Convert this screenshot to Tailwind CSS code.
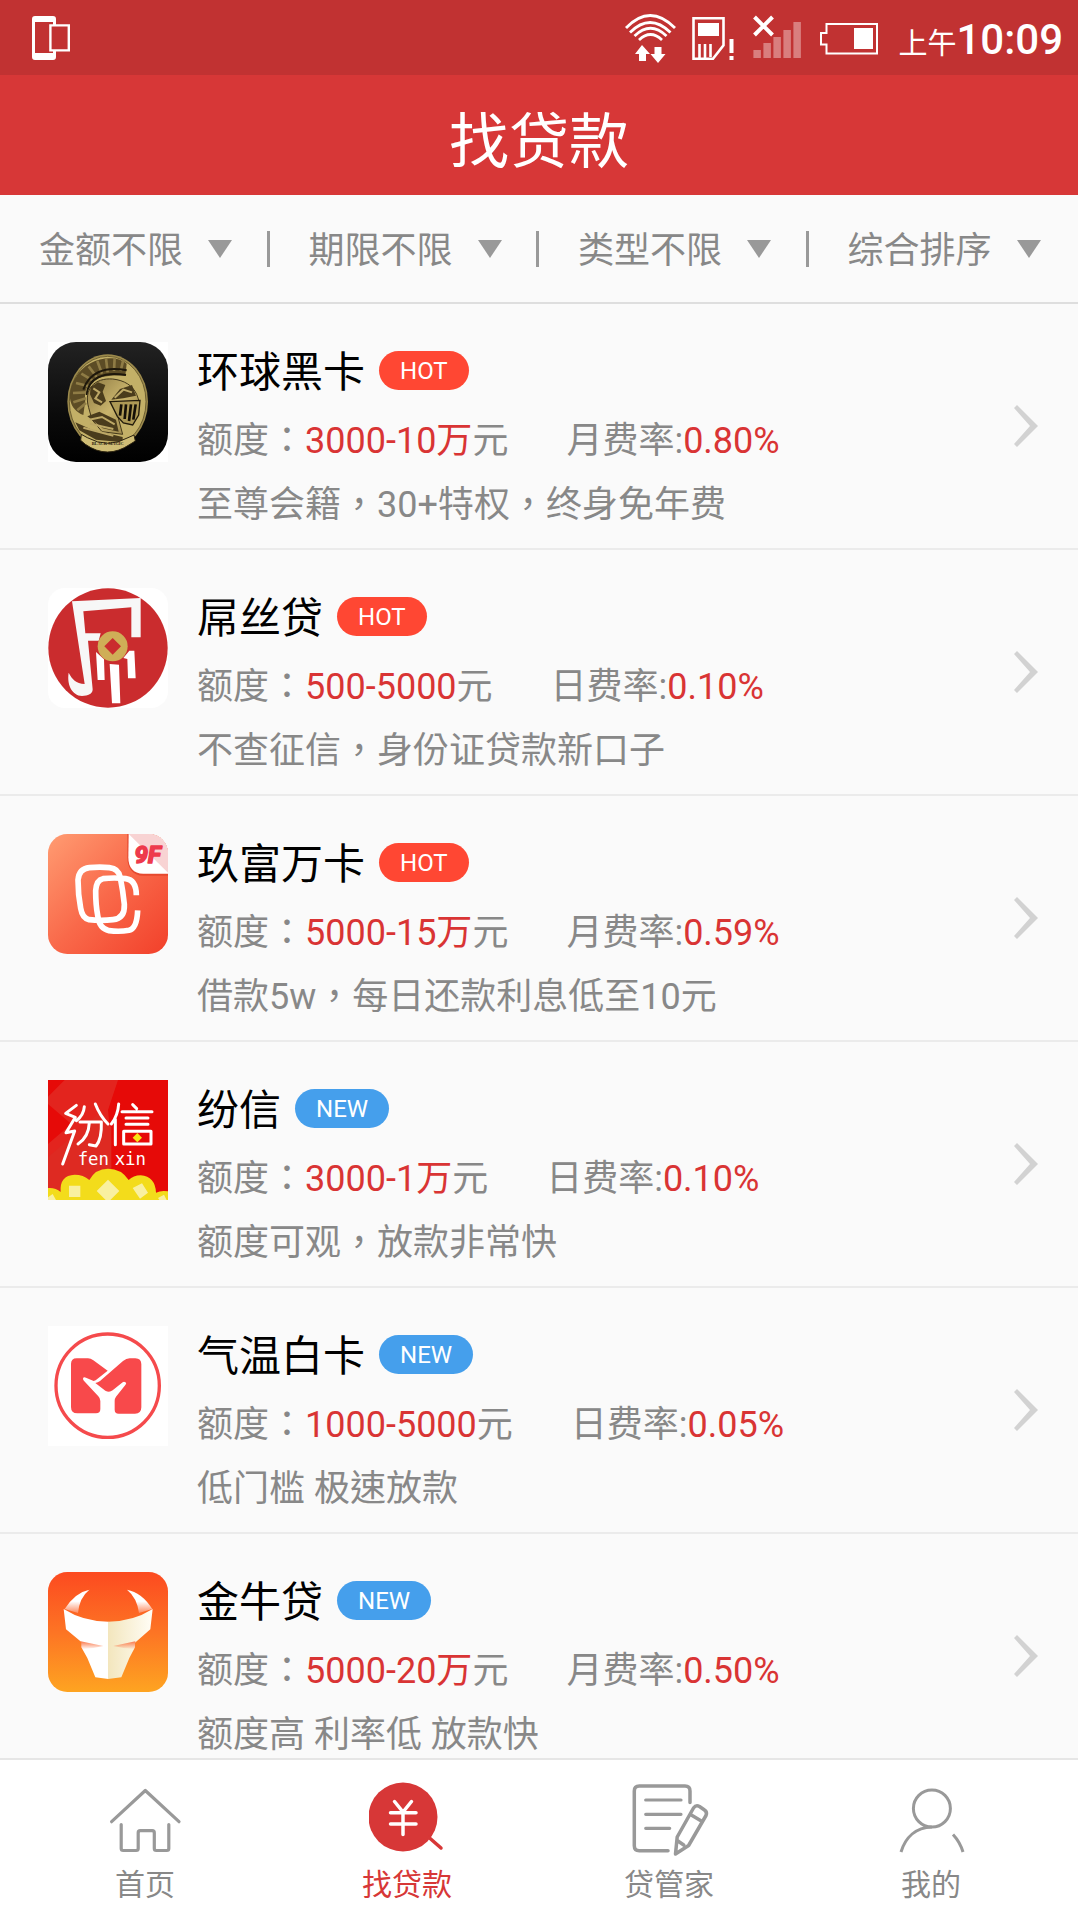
<!DOCTYPE html>
<html lang="zh-Hant">
<head>
<meta charset="utf-8">
<meta name="viewport" content="width=device-width, initial-scale=1">
<title>找贷款</title>
<script src="https://cdn.jsdelivr.net/npm/@tailwindcss/browser@4"></script>
</head>
<body class="flex h-dvh flex-col overflow-hidden bg-[#fafafa] font-[Roboto,'Noto_Sans_CJK_TC',sans-serif] text-[#888]">

<!-- Status bar -->
<div class="flex h-[75px] shrink-0 items-center justify-between bg-[#c13232] pr-[15px] pl-8 text-white">
  <svg class="h-[44px] w-[38px]" viewBox="32 16 38 44" fill="none">
    <path fill="#fff" fill-rule="evenodd" d="M35 16h18q3 0 3 3v6h-3v-3H35v31h18v-3h3v7q0 3-3 3H35q-3 0-3-3V19q0-3 3-3z"/>
    <path stroke="#fff" stroke-width="2.4" d="M50.4 25.4h18.4v25H50.4z"/>
  </svg>
  <div class="flex items-center gap-4">
    <svg class="h-[50px] w-[52px]" viewBox="624 12 52 50" fill="none" stroke="#fff" stroke-width="2.8">
      <path d="M626 27q24-25 49 0M630 31.500q20-20 40.500 0M634.500 35q16-15.500 32 0M639 39q11.500-11 23 0"/>
      <path fill="#fff" stroke="none" d="M642 44l8 9h-4v7h-7v-7h-4zM654.500 46h7v7h4l-7.500 9-7.500-9h4z"/>
    </svg>
    <svg class="h-[50px] w-[44px]" viewBox="691 12 44 50" fill="none" stroke="#fff" stroke-width="2.600">
      <path d="M692.500 17.200h30v27L712 57.800h-19.500z"/>
      <path fill="#fff" stroke="none" d="M697 22h21v13h-21z"/>
      <path d="M698.500 43v14M704 43v14M709.500 43v13"/>
      <path stroke-width="4" d="M730.500 38v14M730.500 55v4"/>
    </svg>
    <svg class="h-[50px] w-[50px]" viewBox="751 12 50 50" fill="none">
      <path fill="#d97e7e" d="M752.400 49h7.500v8h-7.500zM762.400 42h7.500v15h-7.500zM772.400 36h7.500v21h-7.500zM782.400 29h7.500v28h-7.500zM792.400 21h7.500v36h-7.500z"/>
      <path stroke="#fff" stroke-width="4" d="M753.500 16l18 18M771.500 16l-18 18"/>
    </svg>
    <svg class="h-[50px] w-[60px]" viewBox="817 12 60 50" fill="none">
      <path stroke="#fff" stroke-width="2" d="M825.500 23H876v29.500h-50.500V43.500H820v-11.500h5.500z"/>
      <path fill="#fff" d="M853 27h19v21h-19z"/>
    </svg>
    <div class="ml-1 flex items-baseline pt-2 leading-[50px]"><span class="text-[29px]">上午</span><span class="text-[42px] font-medium">10:09</span></div>
  </div>
</div>

<header class="flex h-[120px] shrink-0 items-center justify-center bg-[#d73737] text-white">
  <h1 class="pt-4 text-[60px] leading-[72px] font-normal">找贷款</h1>
</header>

<!-- Filters -->
<form class="grid h-[109px] shrink-0 grid-cols-4 border-b-2 border-[#dedede] text-[36px]">
  <label class="flex items-center pl-[39px]">
    <select aria-label="金额" class="appearance-none bg-transparent pt-1 leading-[54px] outline-none"><option>金额不限</option></select>
    <svg class="mr-auto ml-6 h-[18px] w-6 shrink-0" viewBox="0 0 24 18" fill="#999"><path d="M0 0h24L12 18z"/></svg>
    <span class="h-9 w-[3px] shrink-0 bg-[#999]"></span>
  </label>
  <label class="flex items-center pl-[39px]">
    <select aria-label="期限" class="appearance-none bg-transparent pt-1 leading-[54px] outline-none"><option>期限不限</option></select>
    <svg class="mr-auto ml-6 h-[18px] w-6 shrink-0" viewBox="0 0 24 18" fill="#999"><path d="M0 0h24L12 18z"/></svg>
    <span class="h-9 w-[3px] shrink-0 bg-[#999]"></span>
  </label>
  <label class="flex items-center pl-[39px]">
    <select aria-label="类型" class="appearance-none bg-transparent pt-1 leading-[54px] outline-none"><option>类型不限</option></select>
    <svg class="mr-auto ml-6 h-[18px] w-6 shrink-0" viewBox="0 0 24 18" fill="#999"><path d="M0 0h24L12 18z"/></svg>
    <span class="h-9 w-[3px] shrink-0 bg-[#999]"></span>
  </label>
  <label class="flex items-center pl-[39px]">
    <select aria-label="排序" class="appearance-none bg-transparent pt-1 leading-[54px] outline-none"><option>综合排序</option></select>
    <svg class="mr-auto ml-6 h-[18px] w-6 shrink-0" viewBox="0 0 24 18" fill="#999"><path d="M0 0h24L12 18z"/></svg>
  </label>
</form>

<!-- Loan list -->
<main class="min-h-0 flex-1 overflow-y-auto [scrollbar-width:none]">
<ul class="text-[36px] leading-[64px]">
  <li class="border-b-2 border-[#ebebeb]">
    <a href="#" class="flex h-[244px] items-start pt-[37px] pr-10 pl-12">
      <svg class="mt-px size-[120px] shrink-0" viewBox="54 65 360 360">
        <defs>
          <linearGradient id="blk" x2="0" y2="1"><stop stop-color="#222"/><stop offset=".6" stop-color="#0b0b0b"/><stop offset="1" stop-color="#000"/></linearGradient>
          <linearGradient id="gold" x2="1" y2="1"><stop stop-color="#8e7a43"/><stop offset=".5" stop-color="#c9b46c"/><stop offset="1" stop-color="#8a7640"/></linearGradient>
        </defs>
        <path fill="#fff" d="M54 65h360v360H54z"/>
        <rect x="54" y="65" width="360" height="360" rx="84" fill="url(#blk)"/>
        <ellipse cx="233" cy="244" rx="121" ry="142" fill="#9c8a4c"/>
        <ellipse cx="233" cy="244" rx="115" ry="136" fill="#c3b067" stroke="#4b3f1d" stroke-width="2"/>
        <path fill="#5c4c25" d="M290 130C255 100 170 110 134 176 108 224 118 268 160 284L166 240C160 190 190 160 286 166z"/>
        <path stroke="#8f7c45" stroke-width="8" fill="none" d="M280 118l-8 34M254 112l-2 40M228 114l5 42M202 122l14 38M176 138l24 32M154 160l34 20M138 188l40 10M129 218l42-2M130 246l38-12M142 270l26-22"/>
        <path fill="none" stroke="#1d170b" stroke-width="6" d="M288 164C220 152 174 174 170 224M290 150C220 136 176 160 160 208"/>
        <path fill="url(#gold)" stroke="#44381a" stroke-width="3" d="M176 262C160 206 194 172 248 176c36 4 60 20 72 46l8 22-70 16 6 30 14 52-62-8-30-36z"/>
        <path fill="#4a3c1c" d="M182 200l22-14 22 8-8 20 10 28-16 14-20-8-12-26zM244 238l26-32 36-12 12 32-38 8zM136 306l50 22 92 22v16l-80-8-50-28zM172 288l36-14 50 24 8 36-48-10z"/>
        <path fill="none" stroke="#bda866" stroke-width="6" d="M190 204l18 12-12 18 20 12M254 232l26-24 26 8M178 298l38-8 38 22M180 310l70 16M160 322l90 24"/>
        <path fill="#ad9955" stroke="#211a0b" stroke-width="4" d="M240 244l90-4-4 44-18 30-28-6-18-20z"/>
        <path stroke="#130f07" stroke-width="8" d="M274 252l-4 34M288 252l-4 44M303 252l-6 50M317 252l-7 46"/>
        <path fill="#cfbd76" stroke="#2d2410" stroke-width="3" d="M154 342l18 10q62 34 122 0l18-8 4 18-16 10q-68 46-134 0l-14-12z"/>
        <text x="233" y="375" text-anchor="middle" font-family="Liberation Serif, serif" font-weight="700" font-size="13" fill="#2a210e">BLACK MAGIC</text>
      </svg>
      <div class="ml-[29px] flex-1">
        <div class="mb-1 flex h-16 items-center gap-3.5">
          <h2 class="text-[42px] font-normal text-black">环球黑卡</h2>
          <span class="mb-1.5 h-[39px] rounded-full bg-[#ff4733] px-[21px] text-2xl leading-[40px] text-white">HOT</span>
        </div>
        <p class="flex gap-[58px]"><span>额度：<span class="text-[#d93434]">3000-10万</span>元</span><span>月费率:<span class="text-[#d93434]">0.80%</span></span></p>
        <p>至尊会籍，30+特权，终身免年费</p>
      </div>
      <svg class="mt-16 h-[42px] w-6 shrink-0" viewBox="0 0 24 42" fill="#d2d2d2"><path d="M3 0l21 21L3 42 0 39l16-18L0 3z"/></svg>
    </a>
  </li>
  <li class="border-b-2 border-[#ebebeb]">
    <a href="#" class="flex h-[244px] items-start pt-[37px] pr-10 pl-12">
      <svg class="mt-px size-[120px] shrink-0" viewBox="54 52 360 360">
        <rect x="54" y="52" width="360" height="360" rx="50" fill="#fff"/>
        <circle cx="234" cy="232" r="179" fill="#ca2c2e"/>
        <path fill="#f7f7f7" d="M126 92l206-10v118h-28v-90l-144 12 6 66h46l-6 22h-32l14 146c0 14-14 20-32 20-30-2-46-34-40-70 10 20 22 32 48 34z"/>
        <path fill="#fff" d="M198 244l24 22 2 62h-21zM239 280l28 2 4 116h-25zM280 262l18-22h15l4 83h-23l-2-58z"/>
        <circle cx="248" cy="227" r="45" fill="#cfae57"/>
        <path fill="#ca2c2e" d="M248 202l25 25-25 25-25-25z"/>
      </svg>
      <div class="ml-[29px] flex-1">
        <div class="mb-1 flex h-16 items-center gap-3.5">
          <h2 class="text-[42px] font-normal text-black">屌丝贷</h2>
          <span class="mb-1.5 h-[39px] rounded-full bg-[#ff4733] px-[21px] text-2xl leading-[40px] text-white">HOT</span>
        </div>
        <p class="flex gap-[58px]"><span>额度：<span class="text-[#d93434]">500-5000</span>元</span><span>日费率:<span class="text-[#d93434]">0.10%</span></span></p>
        <p>不查征信，身份证贷款新口子</p>
      </div>
      <svg class="mt-16 h-[42px] w-6 shrink-0" viewBox="0 0 24 42" fill="#d2d2d2"><path d="M3 0l21 21L3 42 0 39l16-18L0 3z"/></svg>
    </a>
  </li>
  <li class="border-b-2 border-[#ebebeb]">
    <a href="#" class="flex h-[244px] items-start pt-[37px] pr-10 pl-12">
      <svg class="mt-px size-[120px] shrink-0" viewBox="54 56 360 360">
        <defs>
          <linearGradient id="org" x2="1" y2="1"><stop stop-color="#ff9c72"/><stop offset=".5" stop-color="#f9694a"/><stop offset="1" stop-color="#f2402a"/></linearGradient>
          <clipPath id="rc"><rect x="54" y="56" width="360" height="360" rx="58"/></clipPath>
        </defs>
        <g clip-path="url(#rc)">
          <path fill="url(#org)" d="M54 56h360v360H54z"/>
          <path fill="#e6492f" d="M292 56h122v125h-74c-32 0-48-24-48-54z"/>
          <path fill="#fff" d="M296 56h118v119h-74c-30 0-45-20-45-48z"/>
          <path fill="#f8d3d3" d="M296 56h118v116z"/>
        </g>
        <text x="353" y="144" text-anchor="middle" font-family="Roboto, sans-serif" font-weight="700" font-style="italic" font-size="72" fill="#ee3a4c" stroke="#ee3a4c" stroke-width="5" stroke-linejoin="round">9F</text>
        <g fill="none" stroke="#fff" stroke-width="17">
          <path d="M144 194q3-34 34-37 32-3 60 0 28 3 33 30 8 40 12 80 2 42-34 46-36 4-72 0-20-4-25-34-8-42-8-85z"/>
          <path d="M319 240q0-46-32-50-34-4-68 0-20 4-22 36 0 42 6 74 4 40 34 46 32 4 60-1 24-6 26-60"/>
        </g>
      </svg>
      <div class="ml-[29px] flex-1">
        <div class="mb-1 flex h-16 items-center gap-3.5">
          <h2 class="text-[42px] font-normal text-black">玖富万卡</h2>
          <span class="mb-1.5 h-[39px] rounded-full bg-[#ff4733] px-[21px] text-2xl leading-[40px] text-white">HOT</span>
        </div>
        <p class="flex gap-[58px]"><span>额度：<span class="text-[#d93434]">5000-15万</span>元</span><span>月费率:<span class="text-[#d93434]">0.59%</span></span></p>
        <p>借款5w，每日还款利息低至10元</p>
      </div>
      <svg class="mt-16 h-[42px] w-6 shrink-0" viewBox="0 0 24 42" fill="#d2d2d2"><path d="M3 0l21 21L3 42 0 39l16-18L0 3z"/></svg>
    </a>
  </li>
  <li class="border-b-2 border-[#ebebeb]">
    <a href="#" class="flex h-[244px] items-start pt-[37px] pr-10 pl-12">
      <svg class="mt-px size-[120px] shrink-0" viewBox="54 58 360 360">
        <path fill="#e60a08" d="M54 58h360v360H54z"/>
        <path fill="#e22b24" d="M54 108l50-50h160l-30 90 10 100-60 80H54V250l70-60-70-60z" opacity=".8"/>
        <path fill="#de2a22" d="M54 290l150-130 40 40v218H54z"/>
        <g fill="none" stroke="#fff" stroke-width="9" stroke-linecap="round" stroke-linejoin="round">
          <path d="M139 134l-32 24 29 12-28 46 26-5-36 99M163 138q-2 26-24 42M196 130q14 36 38 60M150 184h64q2 50-16 72l-20-4M178 186q-2 44-34 64M266 130q-2 34-22 60M256 176v76M308 132l12 12M276 153h90M288 172h66M288 191h66M281 212h82v38h-82z"/>
        </g>
        <text y="312" font-family="DejaVu Sans Mono, monospace" font-size="52" fill="#fff"><tspan x="143">fen</tspan><tspan x="254">xin</tspan></text>
        <path fill="#f8e414" d="M322 217l14 14-14 14-14-14z"/>
        <path fill="#f3dc1b" d="M54 418v-36q22-2 38 12-4-50 42-52 26 0 44 16 18-34 56-34 40 0 62 34 14-14 36-14 44 4 46 52 16-8 36-4v26z"/>
        <path fill="#f9f0a0" d="M117 375h34v34h-34zM234 357l34 34-27 27h-14l-27-27zM308 382l28-14 18 28-24 18zM54 410l14-10 10 18H54zM384 412l18-10 8 16h-22z"/>
      </svg>
      <div class="ml-[29px] flex-1">
        <div class="mb-1 flex h-16 items-center gap-3.5">
          <h2 class="text-[42px] font-normal text-black">纷信</h2>
          <span class="mb-1.5 h-[39px] rounded-full bg-[#459fec] px-[21px] text-2xl leading-[40px] text-white">NEW</span>
        </div>
        <p class="flex gap-[58px]"><span>额度：<span class="text-[#d93434]">3000-1万</span>元</span><span>日费率:<span class="text-[#d93434]">0.10%</span></span></p>
        <p>额度可观，放款非常快</p>
      </div>
      <svg class="mt-16 h-[42px] w-6 shrink-0" viewBox="0 0 24 42" fill="#d2d2d2"><path d="M3 0l21 21L3 42 0 39l16-18L0 3z"/></svg>
    </a>
  </li>
  <li class="border-b-2 border-[#ebebeb]">
    <a href="#" class="flex h-[244px] items-start pt-[37px] pr-10 pl-12">
      <svg class="mt-px size-[120px] shrink-0" viewBox="54 52 360 360">
        <path fill="#fff" d="M54 52h360v360H54z"/>
        <circle cx="233" cy="231" r="155" fill="none" stroke="#f54a4c" stroke-width="10"/>
        <path fill="#f8494b" d="M123 166q0-17 17-17h34q8 0 16 6l43 31-36 29-6 2-23-10q-8-3-9 3 0 4 4 8l42 45q6 6 6 14v24q0 13-13 13h-56q-19 0-19-19z"/>
        <path fill="#f8494b" d="M196 223q8-1 14-6l69-60q10-8 20-8h17q18 0 18 18v129q0 19-19 19h-49q-12 0-12-12v-27q0-6 4-12l28-35q5-6 0-8-4-3-8 0l-30 24q-10 8-22 1z"/>
      </svg>
      <div class="ml-[29px] flex-1">
        <div class="mb-1 flex h-16 items-center gap-3.5">
          <h2 class="text-[42px] font-normal text-black">气温白卡</h2>
          <span class="mb-1.5 h-[39px] rounded-full bg-[#459fec] px-[21px] text-2xl leading-[40px] text-white">NEW</span>
        </div>
        <p class="flex gap-[58px]"><span>额度：<span class="text-[#d93434]">1000-5000</span>元</span><span>日费率:<span class="text-[#d93434]">0.05%</span></span></p>
        <p>低门槛 极速放款</p>
      </div>
      <svg class="mt-16 h-[42px] w-6 shrink-0" viewBox="0 0 24 42" fill="#d2d2d2"><path d="M3 0l21 21L3 42 0 39l16-18L0 3z"/></svg>
    </a>
  </li>
  <li class="border-b-2 border-[#ebebeb]">
    <a href="#" class="flex h-[244px] items-start pt-[37px] pr-10 pl-12">
      <svg class="mt-px size-[120px] shrink-0" viewBox="54 52 360 360">
        <defs>
          <linearGradient id="sun" x2="0" y2="1"><stop stop-color="#fc4a20"/><stop offset=".5" stop-color="#fd7424"/><stop offset="1" stop-color="#fea421"/></linearGradient>
          <linearGradient id="horn" x2="0" y2="1"><stop stop-color="#fff"/><stop offset=".5" stop-color="#fff"/><stop offset="1" stop-color="#fd8a60"/></linearGradient>
          <linearGradient id="face"><stop stop-color="#f3e6bd"/><stop offset="1" stop-color="#fffdf6"/></linearGradient>
          <linearGradient id="shade" x2="0" y2="1"><stop stop-color="#fb7a4c"/><stop offset="1" stop-color="#fb7a4c" stop-opacity="0"/></linearGradient>
        </defs>
        <rect x="54" y="52" width="360" height="360" rx="58" fill="url(#sun)"/>
        <path fill="url(#horn)" d="M104 163q32-50 74-58-30 24-34 70zM367 163q-32-50-76-58 30 24 36 70z"/>
        <path fill="#fff" d="M101 163q60 38 134 38v172l-39-5-24-58-18-32v-16l-46-38z"/>
        <path fill="url(#face)" d="M368 163q-60 38-134 38v172l40-5 24-58 17-32v-14l46-40z"/>
        <path fill="url(#shade)" d="M152 260l68 14-30 6-36 4zM316 260l-66 14 30 6 35 4z"/>
      </svg>
      <div class="ml-[29px] flex-1">
        <div class="mb-1 flex h-16 items-center gap-3.5">
          <h2 class="text-[42px] font-normal text-black">金牛贷</h2>
          <span class="mb-1.5 h-[39px] rounded-full bg-[#459fec] px-[21px] text-2xl leading-[40px] text-white">NEW</span>
        </div>
        <p class="flex gap-[58px]"><span>额度：<span class="text-[#d93434]">5000-20万</span>元</span><span>月费率:<span class="text-[#d93434]">0.50%</span></span></p>
        <p>额度高 利率低 放款快</p>
      </div>
      <svg class="mt-16 h-[42px] w-6 shrink-0" viewBox="0 0 24 42" fill="#d2d2d2"><path d="M3 0l21 21L3 42 0 39l16-18L0 3z"/></svg>
    </a>
  </li>
</ul>
</main>

<!-- Tab bar -->
<nav class="grid h-[161px] shrink-0 grid-cols-4 border-t-2 border-[#e6e6e6] bg-white pr-4 pl-3.5 text-[30px] leading-[44px]">
  <a href="#" class="flex flex-col items-center gap-[7px] pt-5">
    <svg class="size-[76px]" viewBox="0 0 76 76" fill="none" stroke="#999" stroke-width="3.200" stroke-linecap="round" stroke-linejoin="round"><path d="M4.600 41.700L38.300 10.500 72 41.700M14.200 44.500v24q0 2 2 2h13q2 0 2-2V52.700q0-2 2-2H45.300q2 0 2 2v15.800q0 2 2 2h10.500q2 0 2-2v-24"/></svg>
    <span>首页</span>
  </a>
  <a href="#" aria-current="page" class="flex flex-col items-center gap-[7px] pt-5 text-[#d73737]">
    <svg class="size-[76px]" viewBox="0 0 76 76" fill="none" stroke-linecap="round"><circle cx="34" cy="37" r="34.500" fill="#d73737"/><path stroke="#d73737" stroke-width="3.500" d="M60 57.500l12 10.500"/><path stroke="#fff" stroke-width="3.500" d="M25.500 21.500L34 32l8.500-10.500M21.500 32.700h25.500M21.500 44h25.500M34 32v22.500"/></svg>
    <span>找贷款</span>
  </a>
  <a href="#" class="flex flex-col items-center gap-[7px] pt-5">
    <svg class="size-[76px] overflow-visible" viewBox="0 0 76 76" fill="none" stroke="#999" stroke-width="3.500" stroke-linecap="round" stroke-linejoin="round"><path d="M59 22.500V11q0-5-5-5H8.300q-5 0-5 5v54.700q0 5 5 5H37"/><path stroke-width="3.200" d="M14.700 20H50M14.700 34.300H50M14.700 48.300h24"/><path d="M46.200 57L62.500 28q2.500-3.500 6-1.500l5 3.500q3 2 1.500 5.500L57.600 65.500 44.500 74zM60.300 35l10 6M46.200 60.500l6.500 4.500"/></svg>
    <span>贷管家</span>
  </a>
  <a href="#" class="flex flex-col items-center gap-[7px] pt-5">
    <svg class="size-[76px]" viewBox="0 0 76 76" fill="none" stroke="#999" stroke-width="3"><circle cx="38.900" cy="28.500" r="18.500"/><path d="M8 72C12.500 57 23 47.500 38.900 47M60 54.500q7 7.500 10 17.500"/></svg>
    <span>我的</span>
  </a>
</nav>
</body>
</html>
